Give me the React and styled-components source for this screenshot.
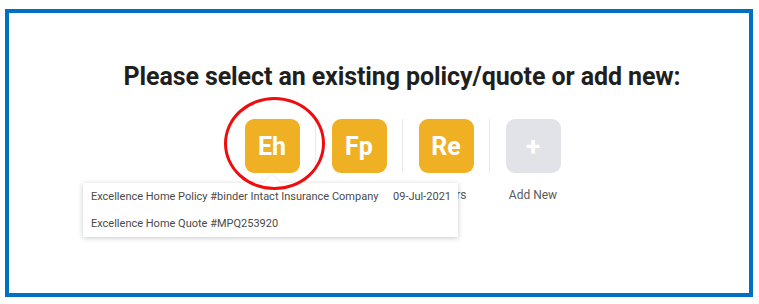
import React from "react";
import styled, { createGlobalStyle } from "styled-components";

const Global = createGlobalStyle`
  html, body { margin: 0; padding: 0; background: #ffffff; }
  body { font-family: Roboto, "Liberation Sans", Arial, sans-serif; }
`;

const Frame = styled.div`
  box-sizing: border-box;
  width: 748px;
  height: 288px;
  margin: 9px 0 0 5px;
  border: 4px solid #0070c0;
  background: #fff;
  padding: 49px 0 0 46px;
  display: flex;
  flex-direction: column;
  align-items: center;
`;

const Title = styled.h1`
  margin: 0;
  font-family: Roboto, "Liberation Sans", Arial, sans-serif;
  font-weight: 700;
  font-size: 25px;
  line-height: 30px;
  color: #1f1f1f;
  letter-spacing: -0.1px;
`;

const Row = styled.div`
  display: flex;
  margin-top: 27px;
`;

const Item = styled.div`
  position: relative;
  box-sizing: border-box;
  width: 87px;
  height: 96px;
  display: flex;
  flex-direction: column;
  align-items: center;
  padding-left: 1px;
`;

const Divider = styled.span`
  position: absolute;
  left: 0;
  top: 0;
  width: 1px;
  height: 54px;
  background: #e9e9e9;
`;

const Tile = styled.div`
  width: 55px;
  height: 54px;
  flex: none;
  border-radius: 9px;
  background: ${(p) => (p.$add ? "#e2e3e8" : "#efb023")};
  color: #fff;
  display: flex;
  align-items: center;
  justify-content: center;
  font-weight: 700;
  font-size: ${(p) => (p.$add ? "26px" : "25px")};
  line-height: 1;
`;

const Label = styled.div`
  margin-top: 15px;
  font-size: 12px;
  line-height: 14px;
  color: #5a5a5a;
  white-space: nowrap;
`;

const Ring = styled.div`
  position: absolute;
  left: -4px;
  top: -22px;
  width: 101px;
  height: 93px;
  box-sizing: border-box;
  border: 3px solid #f00c0c;
  border-radius: 50%;
  pointer-events: none;
  z-index: 3;
`;

const Popup = styled.div`
  position: absolute;
  left: -145px;
  top: 64px;
  width: 375px;
  box-sizing: border-box;
  background: #fff;
  box-shadow: 0 1px 5px rgba(0, 0, 0, 0.22);
  z-index: 2;
  &::before {
    content: "";
    position: absolute;
    top: -8px;
    left: 181px;
    border-left: 8px solid transparent;
    border-right: 8px solid transparent;
    border-bottom: 8px solid #fff;
    filter: drop-shadow(0 -1px 1px rgba(0, 0, 0, 0.08));
  }
`;

const PopRow = styled.div`
  display: flex;
  justify-content: space-between;
  align-items: center;
  height: 27px;
  padding: 0 7px 0 8px;
  font-size: 11px;
  color: #4a4a4a;
  white-space: nowrap;
`;

const items = [
  { initials: "Eh", label: "Excellence Home" },
  { initials: "Fp", label: "Farm Policy" },
  { initials: "Re", label: "Renters" },
];

export default function App() {
  return (
    <>
      <Global />
      <Frame>
        <Title>Please select an existing policy/quote or add new:</Title>
        <Row>
          {items.map((it, i) => (
            <Item key={it.initials}>
              {i > 0 && <Divider />}
              <Tile>{it.initials}</Tile>
              <Label>{it.label}</Label>
              {i === 0 && (
                <>
                  <Ring />
                  <Popup>
                    <PopRow>
                      <span>Excellence Home Policy #binder Intact Insurance Company</span>
                      <span>09-Jul-2021</span>
                    </PopRow>
                    <PopRow>
                      <span>Excellence Home Quote #MPQ253920</span>
                    </PopRow>
                  </Popup>
                </>
              )}
            </Item>
          ))}
          <Item>
            <Divider />
            <Tile $add>+</Tile>
            <Label>Add New</Label>
          </Item>
        </Row>
      </Frame>
    </>
  );
}
